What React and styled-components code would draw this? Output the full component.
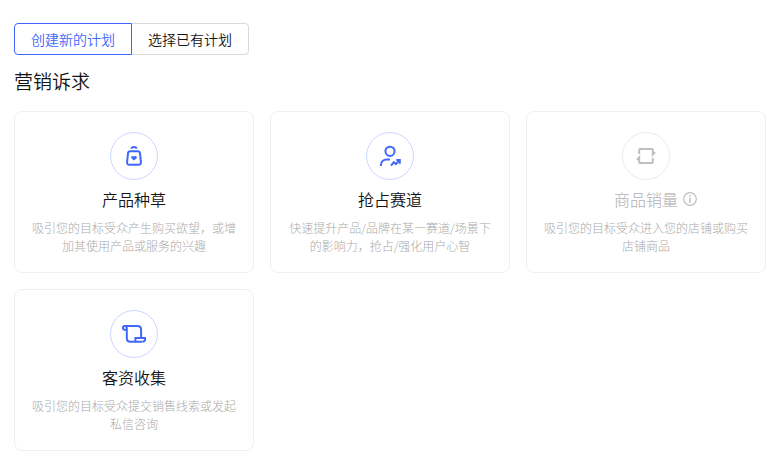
import React, { useState } from "react";
import styled, { createGlobalStyle } from "styled-components";

const GlobalStyle = createGlobalStyle`
  * {
    box-sizing: border-box;
  }

  body {
    margin: 0;
    background-color: #fff;
    color: #141414;
    font-family: "Noto Sans CJK SC", sans-serif;
    font-weight: 350;
  }
`;

const Page = styled.main`
  display: flex;
  flex-direction: column;
  align-items: flex-start;
  padding: 23px 14px 9px;
`;

const TabGroup = styled.div`
  display: flex;
`;

const Tab = styled.button`
  position: relative;
  z-index: ${({ $active }) => ($active ? 1 : 0)};
  height: 32px;
  padding: 0 16px;
  border: 1px solid ${({ $active }) => ($active ? "#4068fa" : "#d9d9d9")};
  background-color: #fff;
  color: ${({ $active }) => ($active ? "#4068fa" : "#141414")};
  font: inherit;
  font-size: 14px;
  line-height: 28px;
  cursor: pointer;

  &:first-child {
    border-radius: 4px 0 0 4px;
  }

  &:last-child {
    border-radius: 0 4px 4px 0;
  }

  & + & {
    margin-left: -1px;
  }
`;

const Heading = styled.h2`
  margin: 12px 0 16px;
  font-size: 19px;
  font-weight: 350;
  line-height: 28px;
`;

const Grid = styled.div`
  display: grid;
  grid-template-columns: repeat(3, 1fr);
  gap: 16px;
  width: 100%;
`;

const CardWrapper = styled.button`
  display: flex;
  flex-direction: column;
  align-items: center;
  padding: 20px 16px 17px;
  border: 1px solid #f0f0f0;
  border-radius: 8px;
  background-color: #fff;
  color: #141414;
  font: inherit;
  cursor: pointer;

  &:disabled {
    color: #bfbfbf;
    cursor: not-allowed;
  }
`;

const IconCircle = styled.span`
  display: flex;
  align-items: center;
  justify-content: center;
  width: 48px;
  height: 48px;
  border: 1px solid ${({ $disabled }) => ($disabled ? "#ededed" : "#ccd6ff")};
  border-radius: 50%;
  color: ${({ $disabled }) => ($disabled ? "#bfbfbf" : "#4068fa")};
`;

const Title = styled.span`
  display: flex;
  align-items: center;
  margin-top: 7px;
  font-size: 16px;
  line-height: 24px;
`;

const Description = styled.span`
  margin-top: 8px;
  color: #aaa;
  font-size: 12px;
  font-weight: 300;
  line-height: 18px;
  text-align: center;
`;

const Icon = ({ children }) => (
  <svg
    width="24"
    height="24"
    viewBox="0 0 24 24"
    fill="none"
    stroke="currentColor"
    strokeWidth="2"
    aria-hidden="true"
  >
    {children}
  </svg>
);

const BagIcon = () => (
  <Icon>
    <path d="M9.3 4.8a2.8 2.3 0 0 1 5.4 0" />
    <path d="M8.2 7.2h7.6c1.2 0 2 .7 2.2 1.9l.9 9c.2 1.6-.8 2.7-2.3 2.7H7.4c-1.5 0-2.5-1.1-2.3-2.7l.9-9c.2-1.2 1-1.9 2.2-1.9Z" />
    <path
      d="M12 16.6l-2.4-2.1c-1.4-1.4.6-3.5 2.4-1.9 1.8-1.6 3.8.5 2.4 1.9Z"
      fill="currentColor"
      stroke="none"
    />
  </Icon>
);

const UserTrendIcon = () => (
  <Icon>
    <circle cx="12" cy="7.3" r="4.6" />
    <path d="M2.9 22v-.7c0-3.5 2.5-5.9 6-5.9h3" />
    <path d="M13 21.6l2.8-3.4 2.1 1.9 3.6-3.8" />
    <path d="M18.3 16h3.5v3.7" />
  </Icon>
);

const LoopIcon = () => (
  <Icon>
    <path d="M5.2 10V5.8c0-.5.3-.8.8-.8h12c.5 0 .8.3.8.8v4.8l2.3-2.4" />
    <path d="M18.8 14v4.2c0 .5-.3.8-.8.8H6c-.5 0-.8-.3-.8-.8v-4.8l-2.3 2.4" />
  </Icon>
);

const ScrollIcon = () => (
  <Icon>
    <path d="M4.8 7.7H2.6c-1 0-1.7-.8-1.7-1.9S1.6 3.9 2.6 3.9h12.9c2.2 0 3.6 1.4 3.6 3.6v8" />
    <path d="M2.8 3.9c1.3 0 2 .8 2 2v10.3c0 2 1.4 3.5 3.4 3.5h12" />
    <path d="M12.9 19.7c.5-.4.5-1.2.5-2v-1.8h9.700v1c0 1.700-1 2.800-2.700 2.800" />
  </Icon>
);

// pulled out of the title's width so that the text stays centred
const InfoMark = styled.svg`
  width: 14px;
  height: 14px;
  margin-left: 5px;
  margin-right: -19px;
`;

const InfoIcon = () => (
  <InfoMark viewBox="0 0 14 14" fill="none" stroke="currentColor" aria-hidden="true">
    <circle cx="7" cy="7" r="6.3" strokeWidth="1.2" />
    <path d="M7 5.5v5.5M7 3v1.5" strokeWidth="1.4" />
  </InfoMark>
);

const tabs = ["创建新的计划", "选择已有计划"];

const goals = [
  {
    title: "产品种草",
    description: "吸引您的目标受众产生购买欲望，或增加其使用产品或服务的兴趣",
    icon: BagIcon,
  },
  {
    title: "抢占赛道",
    description: "快速提升产品/品牌在某一赛道/场景下的影响力，抢占/强化用户心智",
    icon: UserTrendIcon,
  },
  {
    title: "商品销量",
    description: "吸引您的目标受众进入您的店铺或购买店铺商品",
    icon: LoopIcon,
    disabled: true,
  },
  {
    title: "客资收集",
    description: "吸引您的目标受众提交销售线索或发起私信咨询",
    icon: ScrollIcon,
  },
];

const Card = ({ goal }) => (
  <CardWrapper type="button" disabled={goal.disabled}>
    <IconCircle $disabled={goal.disabled}>
      <goal.icon />
    </IconCircle>
    <Title>
      {goal.title}
      {goal.disabled && <InfoIcon />}
    </Title>
    <Description>{goal.description}</Description>
  </CardWrapper>
);

const App = () => {
  const [activeTab, setActiveTab] = useState(0);

  return (
    <>
      <GlobalStyle />
      <Page>
        <TabGroup>
          {tabs.map((label, index) => (
            <Tab
              key={label}
              type="button"
              $active={index === activeTab}
              aria-pressed={index === activeTab}
              onClick={() => setActiveTab(index)}
            >
              {label}
            </Tab>
          ))}
        </TabGroup>
        <Heading>营销诉求</Heading>
        <Grid>
          {goals.map((goal) => (
            <Card key={goal.title} goal={goal} />
          ))}
        </Grid>
      </Page>
    </>
  );
};

export default App;
